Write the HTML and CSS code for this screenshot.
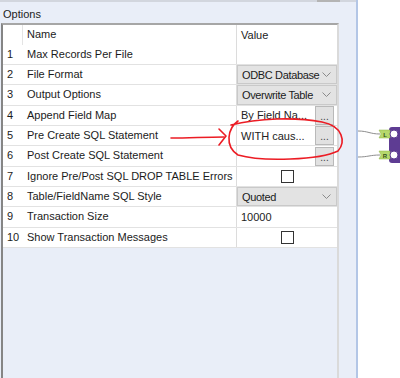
FILE: index.html
```html
<!DOCTYPE html>
<html lang="en">
<head>
  <meta charset="UTF-8">
  <title>Options</title>
  <link rel="stylesheet" href="styles.css">
</head>
<body>
  <div class="app">
    <div class="panel">
      <div class="topbar"><span class="thumb"></span></div>
      <div class="caption">Options</div>
      <div class="grid">
        <div class="row head">
          <div class="idx"></div><div class="name">Name</div><div class="val">Value</div>
        </div>
        <div class="row first">
          <div class="idx">1</div><div class="name">Max Records Per File</div><div class="val"></div>
        </div>
        <div class="row">
          <div class="idx">2</div><div class="name">File Format</div>
          <div class="val"><div class="combo"><span>ODBC Database</span><svg class="chev" width="9" height="6" viewBox="0 0 9 6"><polyline points="0.5,0.5 4.5,4.5 8.5,0.5"/></svg></div></div>
        </div>
        <div class="row">
          <div class="idx">3</div><div class="name">Output Options</div>
          <div class="val"><div class="combo"><span>Overwrite Table</span><svg class="chev" width="9" height="6" viewBox="0 0 9 6"><polyline points="0.5,0.5 4.5,4.5 8.5,0.5"/></svg></div></div>
        </div>
        <div class="row">
          <div class="idx">4</div><div class="name">Append Field Map</div>
          <div class="val"><span class="txt">By Field Na...</span><span class="dots">...</span></div>
        </div>
        <div class="row">
          <div class="idx">5</div><div class="name">Pre Create SQL Statement</div>
          <div class="val"><span class="txt">WITH caus...</span><span class="dots">...</span></div>
        </div>
        <div class="row">
          <div class="idx">6</div><div class="name">Post Create SQL Statement</div>
          <div class="val"><span class="txt"></span><span class="dots">...</span></div>
        </div>
        <div class="row">
          <div class="idx">7</div><div class="name">Ignore Pre/Post SQL DROP TABLE Errors</div>
          <div class="val center"><span class="check"></span></div>
        </div>
        <div class="row">
          <div class="idx">8</div><div class="name">Table/FieldName SQL Style</div>
          <div class="val"><div class="combo"><span>Quoted</span><svg class="chev" width="9" height="6" viewBox="0 0 9 6"><polyline points="0.5,0.5 4.5,4.5 8.5,0.5"/></svg></div></div>
        </div>
        <div class="row">
          <div class="idx">9</div><div class="name">Transaction Size</div>
          <div class="val"><span class="txt">10000</span></div>
        </div>
        <div class="row">
          <div class="idx">10</div><div class="name">Show Transaction Messages</div>
          <div class="val center"><span class="check"></span></div>
        </div>
      </div>
      <!-- red markup drawn over the grid -->
      <svg class="markup" width="357" height="378" viewBox="0 0 357 378">
        <path d="M171 138 C190 138 205 137 224 137"/>
        <path d="M219 129 L226 136 L219 145"/>
        <path d="M238 121 C228 128 224 146 238 155 C262 162 320 160 338 151 C346 142 343 126 322 122 C296 117 258 118 231 125"/>
      </svg>
    </div>
    <div class="canvas">
      <svg width="42" height="378" viewBox="358 0 42 378">
        <path class="wire" d="M358 131 C368 131 370 134 380 134"/>
        <path class="wire" d="M358 157 C368 157 370 155 380 155"/>
        <rect class="node" x="389" y="127" width="14" height="36" rx="3"/>
        <polygon class="tag" points="379,130 390,130 390,138 379,138 381,134"/>
        <polygon class="tag" points="379,151 390,151 390,159 379,159 381,155"/>
        <text class="tagtxt" x="385" y="137">L</text>
        <text class="tagtxt" x="385" y="158">R</text>
        <circle class="port" cx="394" cy="134" r="4"/>
        <circle class="port" cx="394" cy="155" r="4"/>
      </svg>
    </div>
  </div>
</body>
</html>
```
FILE: styles.css
```css
body{margin:0;background:#fff;font-family:"Liberation Sans",Arial,sans-serif;font-size:11px;color:#1b1b1b;}
.app{display:flex;height:378px;overflow:hidden;}
.panel{position:relative;width:356px;flex:none;background:#e9eef8;border-right:2px solid #b3c6e6;display:flex;flex-direction:column;}
.topbar{height:2px;background:#d2d6de;display:flex;justify-content:flex-end;padding-right:16px;}
.thumb{width:23px;background:#b4b4b4;}
.caption{height:21px;line-height:24px;padding-left:3px;color:#222;}
.grid{flex:1;margin-left:1px;width:334px;border-top:2px solid #a6a6a6;border-left:2px solid #858585;border-right:2px solid #dadada;}
.row{display:grid;grid-template-columns:20px 213px 1fr;height:20.35px;box-sizing:border-box;border-bottom:1px solid #e2e2e2;background:#fff;}
.row.head{height:19.6px;border-bottom:none;}
.row.head .idx{border-right:1px solid #e4e4e4;}
.row.first{height:20.4px;}
.idx{padding-left:4px;line-height:19px;}
.name{padding-left:4px;line-height:19px;white-space:nowrap;overflow:hidden;}
.val{border-left:1px solid #dcdcdc;display:flex;align-items:center;padding-left:4px;gap:3px;min-width:0;}
.row.head .val{align-items:flex-start;padding-top:4px;}
.val.center{justify-content:center;padding-left:0;}
.combo{flex:1;align-self:stretch;margin-left:-4px;padding:0 5px 0 4px;background:#e3e3e3;border:1px solid #c9c9c9;display:flex;align-items:center;justify-content:space-between;gap:2px;white-space:nowrap;letter-spacing:-0.35px;}
.chev{flex:none;fill:none;stroke:#8a8a8a;stroke-width:1;}
.txt{flex:1;white-space:nowrap;color:#222;}
.dots{width:17px;height:17px;margin-right:3px;background:#e1e1e1;border:1px solid #b9b9b9;color:#444;text-align:center;line-height:20px;font-size:10px;}
.check{width:11px;height:11px;border:1px solid #333;background:#fff;}
.markup{position:absolute;left:0;top:0;fill:none;stroke:#ec1c24;stroke-width:1.6;stroke-linecap:round;stroke-linejoin:round;}
.canvas{flex:1;background:#fff;}
.wire{fill:none;stroke:#8e8e8e;stroke-width:1;}
.node{fill:#5e3c93;}
.tag{fill:#b6d86c;stroke:#8fb449;stroke-width:0.5;}
.tagtxt{font-size:6px;font-weight:bold;fill:#33501a;text-anchor:middle;}
.port{fill:#fff;stroke:#5e3c93;stroke-width:1;}
```
